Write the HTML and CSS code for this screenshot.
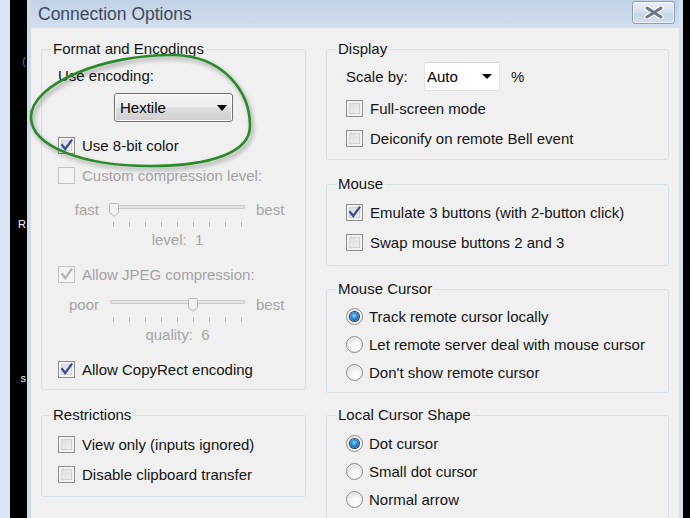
FILE: index.html
```html
<!DOCTYPE html>
<html>
<head>
<meta charset="utf-8">
<title>Connection Options</title>
<link rel="stylesheet" href="styles.css">
</head>
<body>
  <div class="desk"></div>
  <div class="term">
    <span class="t1">(</span>
    <span class="t2">R</span>
    <span class="t3">s</span>
  </div>
  <div class="window">
    <div class="titlebar">
      <span class="title">Connection Options</span>
      <button class="close" aria-label="Close">
        <svg width="20" height="13" viewBox="0 0 20 13">
          <path d="M3 2 L17 11 M17 2 L3 11" stroke="#ffffff" stroke-width="5.6" stroke-linecap="round"/>
          <path d="M3 2 L17 11 M17 2 L3 11" stroke="#6c7889" stroke-width="3" stroke-linecap="round"/>
        </svg>
      </button>
    </div>
    <div class="content">
      <div class="col">
        <fieldset class="group">
          <legend>Format and Encodings</legend>
          <div class="gbody g-format">
            <div class="label-row">Use encoding:</div>
            <div class="select">
              <span>Hextile</span>
              <span class="arrow"></span>
            </div>
            <div class="row cb-row">
              <span class="cb checked"><svg viewBox="0 0 15 15"><path d="M3.2 7.2 L6.2 11 L12.4 2.6"/></svg></span>
              <span>Use 8-bit color</span>
            </div>
            <div class="row cb-row disabled">
              <span class="cb"></span>
              <span>Custom compression level:</span>
            </div>
            <div class="slider s1">
              <div class="slider-row">
                <span class="end-l">fast</span>
                <div class="track">
                  <div class="groove"></div>
                  <svg class="thumb" style="left:-1px" width="10" height="14" viewBox="0 0 10 14"><path d="M1.5 0.5 H8.5 Q9.5 0.5 9.5 1.5 V9.5 L5 13.3 L0.5 9.5 V1.5 Q0.5 0.5 1.5 0.5 Z"/></svg>
                </div>
                <span class="end-r">best</span>
              </div>
              <div class="ticks-row">
                <div class="ticks"><i></i><i></i><i></i><i></i><i></i><i></i><i></i><i></i><i></i></div>
              </div>
              <div class="value">level:  1</div>
            </div>
            <div class="row cb-row disabled jpeg">
              <span class="cb checked"><svg viewBox="0 0 15 15"><path d="M3.2 7.2 L6.2 11 L12.4 2.6"/></svg></span>
              <span>Allow JPEG compression:</span>
            </div>
            <div class="slider s2">
              <div class="slider-row">
                <span class="end-l">poor</span>
                <div class="track">
                  <div class="groove"></div>
                  <svg class="thumb" style="left:78px" width="10" height="14" viewBox="0 0 10 14"><path d="M1.5 0.5 H8.5 Q9.5 0.5 9.5 1.5 V9.5 L5 13.3 L0.5 9.5 V1.5 Q0.5 0.5 1.5 0.5 Z"/></svg>
                </div>
                <span class="end-r">best</span>
              </div>
              <div class="ticks-row">
                <div class="ticks"><i></i><i></i><i></i><i></i><i></i><i></i><i></i><i></i><i></i></div>
              </div>
              <div class="value">quality:  6</div>
            </div>
            <div class="row cb-row copyrect">
              <span class="cb checked"><svg viewBox="0 0 15 15"><path d="M3.2 7.2 L6.2 11 L12.4 2.6"/></svg></span>
              <span>Allow CopyRect encoding</span>
            </div>
          </div>
        </fieldset>
        <fieldset class="group g-gap16">
          <legend>Restrictions</legend>
          <div class="gbody g-restrict">
            <div class="row cb-row">
              <span class="cb"></span>
              <span>View only (inputs ignored)</span>
            </div>
            <div class="row cb-row">
              <span class="cb"></span>
              <span>Disable clipboard transfer</span>
            </div>
          </div>
        </fieldset>
        <div class="row cb-row stray">
          <span class="cb"></span>
        </div>
      </div>

      <div class="col">
        <fieldset class="group">
          <legend>Display</legend>
          <div class="gbody g-display">
            <div class="scale-row">
              <span class="scale-label">Scale by:</span>
              <div class="combo">
                <span>Auto</span>
                <span class="arrow"></span>
              </div>
              <span class="pct">%</span>
            </div>
            <div class="row cb-row">
              <span class="cb"></span>
              <span>Full-screen mode</span>
            </div>
            <div class="row cb-row">
              <span class="cb"></span>
              <span>Deiconify on remote Bell event</span>
            </div>
          </div>
        </fieldset>
        <fieldset class="group g-gap15">
          <legend>Mouse</legend>
          <div class="gbody g-mouse">
            <div class="row cb-row">
              <span class="cb checked"><svg viewBox="0 0 15 15"><path d="M3.2 7.2 L6.2 11 L12.4 2.6"/></svg></span>
              <span>Emulate 3 buttons (with 2-button click)</span>
            </div>
            <div class="row cb-row">
              <span class="cb"></span>
              <span>Swap mouse buttons 2 and 3</span>
            </div>
          </div>
        </fieldset>
        <fieldset class="group g-gap14">
          <legend>Mouse Cursor</legend>
          <div class="gbody g-cursor">
            <div class="row rb-row"><span class="rb checked"></span><span>Track remote cursor locally</span></div>
            <div class="row rb-row"><span class="rb"></span><span>Let remote server deal with mouse cursor</span></div>
            <div class="row rb-row"><span class="rb"></span><span>Don't show remote cursor</span></div>
          </div>
        </fieldset>
        <fieldset class="group g-gap13">
          <legend>Local Cursor Shape</legend>
          <div class="gbody g-shape">
            <div class="row rb-row"><span class="rb checked"></span><span>Dot cursor</span></div>
            <div class="row rb-row"><span class="rb"></span><span>Small dot cursor</span></div>
            <div class="row rb-row"><span class="rb"></span><span>Normal arrow</span></div>
            <div class="row rb-row"><span class="rb"></span></div>
          </div>
        </fieldset>
      </div>
    </div>
  </div>
  <div class="term-r"></div>

  <svg class="annot" width="690" height="518" viewBox="0 0 690 518">
    <path d="M174 55 C224 56 250 92 250 126 C250 152 212 166 150 166 C82 166 31 146 31 117 C31 84 104 54 174 55 Z"/>
  </svg>
</body>
</html>
```

FILE: styles.css
```css
* { box-sizing: border-box; }
html, body { margin: 0; padding: 0; }
body {
  width: 690px;
  height: 518px;
  overflow: hidden;
  position: relative;
  display: flex;
  background: #000;
  font-family: "Liberation Sans", Arial, sans-serif;
  font-size: 15px;
  color: #141414;
}

.desk { width: 10px; flex: none; background: #d9e5f2; }
.term {
  width: 17px; flex: none; background: #000; overflow: hidden;
  font: 11px/14px "Liberation Sans", Arial, sans-serif; color: #f4f4f4;
  text-align: right;
}
.term span { display: block; white-space: nowrap; padding-right: 1px; }
.t1 { margin-top: 54px; color: #3f78c8; }
.t2 { margin-top: 149px; }
.t3 { margin-top: 140px; }
.term-r { width: 7px; flex: none; background: #000; }

.window {
  width: 656px; flex: none;
  border-left: 4px solid #cddbeb;
  border-right: 4px solid #d7e2ee;
  background: #f0f0f0;
  display: flex; flex-direction: column;
}

.titlebar {
  height: 28px; flex: none;
  display: flex; align-items: flex-start;
  background: linear-gradient(#c1d2e6, #d2dfee);
}
.title {
  line-height: 28px; padding-left: 7px;
  font-size: 17.5px; color: #3b4b5e;
}
.close {
  margin: 1px 4px 0 auto;
  width: 43px; height: 23px;
  padding: 0;
  border: 1px solid #8d9db2;
  border-radius: 3px;
  background: linear-gradient(#e9eff7, #d4dfec 50%, #c6d4e5 51%, #d3deec);
  display: flex; align-items: center; justify-content: center;
  box-shadow: inset 0 0 0 1px rgba(255,255,255,0.6);
}
.close svg { display: block; }

.content {
  display: grid;
  grid-template-columns: 265px 343px;
  column-gap: 20px;
  padding: 12px 10px 0;
  align-items: start;
}
.col { display: flex; flex-direction: column; }

.group {
  margin: 0; padding: 0; min-width: 0;
  border: 1px solid #d5dfe5;
  border-radius: 3px;
}
.group legend {
  margin-left: 9px; padding: 0 2px;
  font-size: 15px; line-height: 18px; color: #141414;
}
.g-gap16 { margin-top: 16px; }
.g-gap15 { margin-top: 15px; }
.g-gap14 { margin-top: 14px; }
.g-gap13 { margin-top: 13px; }

.gbody { display: flex; flex-direction: column; }
.g-format { padding: 7px 0 5px 16px; }
.g-restrict { padding: 5px 0 7px 16px; }
.g-display { padding: 4px 0 6px 19px; }
.g-mouse { padding: 4px 0 8px 19px; }
.g-cursor { padding: 4px 0 6px 19px; }
.g-shape { padding: 5px 0 0 19px; }

.label-row { height: 22px; line-height: 22px; }

.row { display: flex; align-items: center; white-space: nowrap; }
.cb-row { height: 30px; gap: 7px; }
.rb-row { height: 28px; gap: 6px; }
.disabled { color: #a3a3a3; }

.cb {
  width: 17px; height: 17px; flex: none;
  border: 1px solid #8e8f8f;
  background: linear-gradient(135deg, #d6d6d6, #f7f7f7);
  box-shadow: inset 0 0 0 2px #f2f2f2, inset 0 0 0 3px #d2d2d2;
  display: flex; align-items: center; justify-content: center;
}
.cb svg { width: 15px; height: 15px; overflow: visible; }
.cb svg path { fill: none; stroke: #3d4c96; stroke-width: 2.3; stroke-linecap: square; stroke-linejoin: miter; }
.disabled .cb { border-color: #c4c4c4; background: #f3f3f3; box-shadow: none; }
.disabled .cb svg path { stroke: #b4b4b4; }

.rb {
  width: 17px; height: 17px; flex: none;
  border-radius: 50%;
  border: 1px solid #8b8b8b;
  background: radial-gradient(circle at 60% 65%, #fbfbfb 0 25%, #dcdcdc 80%);
  box-shadow: inset 0 0 0 1px #f4f4f4;
  display: flex; align-items: center; justify-content: center;
}
.rb.checked::after {
  content: "";
  width: 9px; height: 9px; border-radius: 50%;
  background: radial-gradient(circle at 45% 40%, #8ad0fb 0, #2d86cf 45%, #0f4a86 100%);
  box-shadow: 0 0 0 1px #2c3f56;
}

.select {
  margin: 6px 0 0 56px;
  width: 119px; height: 29px;
  border: 1px solid #707070;
  border-radius: 3px;
  background: linear-gradient(#f3f3f3, #ebebeb 48%, #dddddd 52%, #cfcfcf);
  box-shadow: inset 0 0 0 1px #fcfcfc;
  display: flex; align-items: center; justify-content: space-between;
  padding: 0 5px 0 5px;
  color: #000;
}
.arrow {
  width: 0; height: 0;
  border-left: 5.5px solid transparent;
  border-right: 5.5px solid transparent;
  border-top: 6px solid #000;
}
.select + .cb-row { margin-top: 8px; }

.slider { display: flex; flex-direction: column; color: #a6a6a6; }
.s1 { margin-top: 10px; }
.s2 { margin-top: 6px; }
.slider-row, .ticks-row {
  display: grid;
  grid-template-columns: 41px 135px auto;
  column-gap: 11px;
}
.slider-row { height: 20px; line-height: 20px; }
.end-l { text-align: right; }
.track { position: relative; }
.groove {
  margin-top: 5px; height: 4px;
  border: 1px solid #cbcbcb;
  border-radius: 1px;
  background: #e6e6e6;
}
.thumb { position: absolute; top: 3px; }
.thumb path { fill: #f1f1f1; stroke: #b8b8b8; stroke-width: 1; }
.ticks-row { margin-top: 2px; height: 5px; }
.ticks {
  grid-column: 2;
  display: flex; justify-content: space-between;
  padding: 0 3px;
}
.ticks i { display: block; width: 1px; height: 5px; background: #b9b9b9; }
.slider .value {
  margin-top: 3px; height: 20px; line-height: 20px;
  white-space: pre;
  width: 135px; margin-left: 52px; text-align: center;
}
.jpeg, .copyrect { margin-top: 9px; }

.stray { margin: 16px 0 0 11px; }
.stray .cb { width: 16px; height: 16px; border-color: #b0b0b0; }

.scale-row { display: flex; align-items: center; height: 29px; margin-bottom: 2px; }
.scale-label { width: 78px; flex: none; }
.combo {
  width: 76px; height: 29px;
  border: 1px solid #e2e2e2;
  border-top-color: #d6d6d6;
  border-radius: 2px;
  background: #fff;
  display: flex; align-items: center; justify-content: space-between;
  padding: 0 7px 0 2px;
  color: #000;
}
.combo .arrow { border-left-width: 5px; border-right-width: 5px; border-top-width: 5px; }
.pct { margin-left: 11px; }

.annot { position: absolute; left: 0; top: 0; pointer-events: none; filter: drop-shadow(2px 3px 2px rgba(0,0,0,0.35)); }
.annot path { fill: none; stroke: #2a8a2a; stroke-width: 2.6; }
```
